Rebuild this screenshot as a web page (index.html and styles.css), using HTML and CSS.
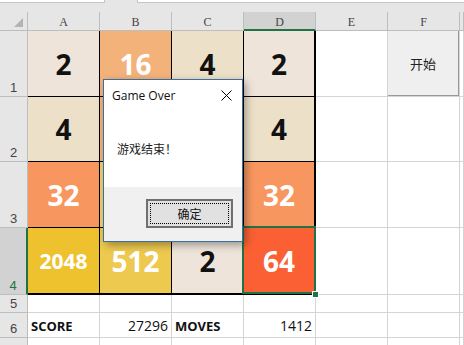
FILE: index.html
```html
<!DOCTYPE html>
<html lang="zh-CN">
<head>
  <meta charset="UTF-8">
  <title>2048</title>
  <link rel="stylesheet" href="styles.css">
</head>
<body>
  <div class="toolbar">
    <div class="name-box"></div>
    <div class="formula-box"></div>
  </div>
  <div class="sheet">
    <div class="hd corner"><span class="corner-mark"></span></div>
    <div class="hd col">A</div>
    <div class="hd col">B</div>
    <div class="hd col">C</div>
    <div class="hd col active-col">D</div>
    <div class="hd col">E</div>
    <div class="hd col">F</div>
    <div class="hd col"></div>

    <div class="hd row">1</div>
    <div class="cell tile t2">2</div>
    <div class="cell tile t16">16</div>
    <div class="cell tile t4">4</div>
    <div class="cell tile t2 edge-r">2</div>
    <div class="cell"></div>
    <div class="cell btn-cell"><div class="start-btn">开始</div></div>
    <div class="cell"></div>

    <div class="hd row">2</div>
    <div class="cell tile t4">4</div>
    <div class="cell tile t8"></div>
    <div class="cell tile t2"></div>
    <div class="cell tile t4 edge-r">4</div>
    <div class="cell"></div>
    <div class="cell"></div>
    <div class="cell"></div>

    <div class="hd row">3</div>
    <div class="cell tile t32">32</div>
    <div class="cell tile t128"></div>
    <div class="cell tile t8"></div>
    <div class="cell tile t32 edge-r">32</div>
    <div class="cell"></div>
    <div class="cell"></div>
    <div class="cell"></div>

    <div class="hd row active-row">4</div>
    <div class="cell tile t2048 edge-b">2048</div>
    <div class="cell tile t512 edge-b">512</div>
    <div class="cell tile t2 edge-b">2</div>
    <div class="cell tile t64 edge-r edge-b selected">64</div>
    <div class="cell"></div>
    <div class="cell"></div>
    <div class="cell"></div>

    <div class="hd row">5</div>
    <div class="cell"></div>
    <div class="cell"></div>
    <div class="cell"></div>
    <div class="cell"></div>
    <div class="cell"></div>
    <div class="cell"></div>
    <div class="cell"></div>

    <div class="hd row">6</div>
    <div class="cell label">SCORE</div>
    <div class="cell num">27296</div>
    <div class="cell label">MOVES</div>
    <div class="cell num">1412</div>
    <div class="cell"></div>
    <div class="cell"></div>
    <div class="cell"></div>

    <div class="hd row">7</div>
    <div class="cell"></div>
    <div class="cell"></div>
    <div class="cell"></div>
    <div class="cell"></div>
    <div class="cell"></div>
    <div class="cell"></div>
    <div class="cell"></div>
  </div>

  <div class="dialog">
    <div class="dialog-title">
      <span>Game Over</span>
      <svg class="close" width="11" height="11" viewBox="0 0 11 11">
        <path d="M0.5 0.5 L10.5 10.5 M10.5 0.5 L0.5 10.5" stroke="#000" stroke-width="1" fill="none"/>
      </svg>
    </div>
    <div class="dialog-body">游戏结束！</div>
    <div class="dialog-foot">
      <div class="ok-btn"><span>确定</span></div>
    </div>
  </div>
</body>
</html>
```

FILE: styles.css
```css
body {
  margin: 0;
  width: 464px;
  height: 345px;
  overflow: hidden;
  background: #e6e6e6;
  font-family: "Noto Sans", "Noto Sans CJK SC", sans-serif;
  position: relative;
}
.toolbar {
  height: 12px;
  position: relative;
}
.name-box,
.formula-box {
  position: absolute;
  top: 0;
  height: 2px;
  background: #fff;
  border-bottom: 1px solid #c6c6c6;
}
.name-box {
  left: 0;
  width: 104px;
  border-right: 1px solid #c6c6c6;
}
.formula-box {
  left: 137px;
  right: 0;
  border-left: 1px solid #c6c6c6;
}
.sheet {
  display: grid;
  grid-template-columns: 28px repeat(6, 72px) 1fr;
  grid-template-rows: 19px 66px 65px 66px 67px 18px 25px 24px;
  background: #fff;
}
.sheet > div {
  box-sizing: border-box;
  border-right: 1px solid #d4d4d4;
  border-bottom: 1px solid #d4d4d4;
}
.hd {
  background: #e6e6e6;
  color: #444;
  border-color: #bdbdbd !important;
}
.hd.col {
  font-family: "Liberation Serif", serif;
  font-size: 12px;
  display: flex;
  align-items: center;
  justify-content: center;
  padding-top: 3px;
}
.hd.row {
  font-family: "Liberation Sans", sans-serif;
  font-size: 13px;
  display: flex;
  align-items: flex-end;
  justify-content: center;
  padding-bottom: 1px;
}
.corner {
  position: relative;
}
.corner-mark {
  position: absolute;
  right: 4px;
  bottom: 3px;
  width: 0;
  height: 0;
  border-left: 9px solid transparent;
  border-bottom: 9px solid #b4b4b4;
}
.active-col {
  background: #d2d2d2;
  border-bottom: 2px solid #217346 !important;
}
.active-row {
  background: #d2d2d2;
  color: #217346 !important;
  border-right: 2px solid #217346 !important;
}
.tile {
  border-color: #000 !important;
  display: flex;
  align-items: center;
  justify-content: center;
  font-family: "Open Sans", sans-serif;
  font-weight: 700;
  font-size: 28px;
  color: #111;
}
.edge-r {
  border-right-width: 2px !important;
}
.edge-b {
  border-bottom-width: 2px !important;
}
.t2 { background: #eee4da; }
.t4 { background: #ede0c8; }
.t8 { background: #f2b179; color: #fff; }
.t16 { background: #f3b27a; color: #fff; }
.t32 { background: #f7965f; color: #fff; }
.t64 { background: #fa6033; color: #fff; }
.t128 { background: #edcf72; color: #fff; }
.t512 { background: #edc94f; color: #fff; }
.t2048 { background: #edc22e; color: #fff; font-size: 21px; }
.selected {
  position: relative;
}
.selected::before {
  content: "";
  position: absolute;
  left: -2px;
  top: -2px;
  width: 74px;
  height: 68px;
  border: 2px solid #217346;
  box-sizing: border-box;
}
.selected::after {
  content: "";
  position: absolute;
  left: 68px;
  top: 63px;
  width: 5px;
  height: 5px;
  background: #217346;
  border: 1px solid #fff;
}
.btn-cell {
  padding: 0;
}
.start-btn {
  height: 100%;
  box-sizing: border-box;
  background: #efefef;
  border-right: 1px solid #9a9a9a;
  border-bottom: 1px solid #9a9a9a;
  display: flex;
  align-items: center;
  justify-content: center;
  font-family: "Noto Sans CJK SC", sans-serif;
  font-size: 13px;
  color: #222;
}
.label,
.num {
  display: flex;
  align-items: flex-end;
  padding: 0 3px 2px;
  font-family: "Open Sans", sans-serif;
  font-size: 14px;
  color: #111;
}
.label {
  font-weight: 700;
  font-size: 13px;
}
.num {
  justify-content: flex-end;
}
.dialog {
  position: absolute;
  left: 103px;
  top: 79px;
  width: 140px;
  height: 163px;
  box-sizing: border-box;
  border: 1px solid #3c6e9f;
  background: #fff;
  box-shadow: 3px 3px 8px rgba(0, 0, 0, 0.35);
  display: flex;
  flex-direction: column;
}
.dialog-title {
  height: 30px;
  display: flex;
  align-items: center;
  justify-content: space-between;
  padding: 0 10px 0 8px;
  font-family: "Open Sans", sans-serif;
  font-size: 12px;
  color: #111;
}
.dialog-body {
  height: 77px;
  box-sizing: border-box;
  padding: 30px 0 0 13px;
  font-family: "Noto Sans CJK SC", sans-serif;
  font-size: 12px;
  line-height: 17px;
  color: #222;
}
.dialog-foot {
  flex: 1;
  background: #f0f0f0;
  padding: 12px 0 0 42px;
}
.ok-btn {
  width: 87px;
  height: 29px;
  box-sizing: border-box;
  border: 2px solid #6f6f6f;
  background: #e1e1e1;
  padding: 2px;
}
.ok-btn span {
  display: flex;
  align-items: center;
  justify-content: center;
  height: 100%;
  box-sizing: border-box;
  border: 1px dotted #000;
  font-family: "Noto Sans CJK SC", sans-serif;
  font-size: 12px;
  color: #111;
}
```
